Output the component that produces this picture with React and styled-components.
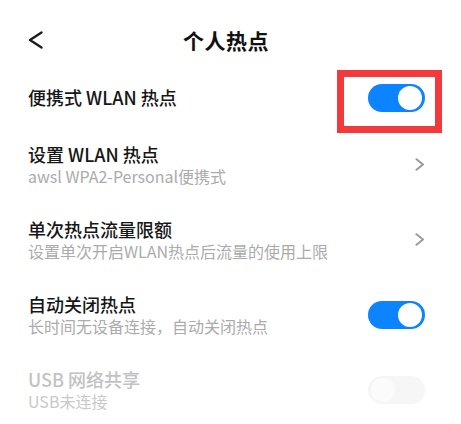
import React from 'react';
import styled, { createGlobalStyle } from 'styled-components';

const GlobalStyle = createGlobalStyle`
  html, body {
    margin: 0;
    padding: 0;
    background: #ffffff;
  }
  body {
    font-family: "Noto Sans CJK SC", "Noto Sans", sans-serif;
    -webkit-font-smoothing: antialiased;
  }
`;

const Page = styled.div`
  width: 461px;
  height: 424px;
  overflow: hidden;
  background: #ffffff;
`;

// Header
const Header = styled.header`
  height: 68px;
  box-sizing: border-box;
  padding: 12px 37px 0 28px;
  display: grid;
  grid-template-columns: 1fr auto 1fr;
  align-items: center;
`;

const BackButton = styled.button`
  justify-self: start;
  border: 0;
  background: none;
  padding: 0;
  width: 16px;
  height: 18px;
  display: flex;
  cursor: pointer;
`;

const Title = styled.h1`
  margin: 0;
  font-size: 21px;
  font-weight: 700;
  color: #111111;
  letter-spacing: 0.5px;
`;

// Rows
const List = styled.div`
  display: flex;
  flex-direction: column;
`;

const Row = styled.div`
  position: relative;
  height: ${(p) => p.$height || 75}px;
  box-sizing: border-box;
  padding: 0 36px 0 28px;
  display: flex;
  align-items: center;
  justify-content: space-between;
`;

const Texts = styled.div`
  display: flex;
  flex-direction: column;
`;

const Label = styled.div`
  font-size: 18px;
  line-height: 23px;
  font-weight: 500;
  color: ${(p) => (p.$disabled ? '#c2c2c2' : '#161616')};
`;

const Hint = styled.div`
  font-size: 16px;
  line-height: 21px;
  color: ${(p) => (p.$disabled ? '#c9c9c9' : '#ababab')};
`;

const Track = styled.div`
  position: relative;
  width: 57px;
  height: 28px;
  border-radius: 14px;
  background: ${(p) => (p.$disabled ? '#f6f6f6' : '#0d84ff')};
  flex-shrink: 0;
`;

const Knob = styled.div`
  position: absolute;
  top: 2px;
  ${(p) => (p.$on ? 'right: 3px;' : 'left: 3px;')}
  width: 24px;
  height: 24px;
  border-radius: 50%;
  background: ${(p) => (p.$disabled ? '#fbfbfb' : '#ffffff')};
`;

const Highlight = styled.div`
  position: absolute;
  left: 337px;
  top: 2px;
  width: 105px;
  height: 63px;
  box-sizing: border-box;
  border: 7px solid #f23a3c;
  pointer-events: none;
`;

const Chevron = () => (
  <svg width="10" height="13" viewBox="0 0 10 13" fill="none">
    <path d="M1.5 1.2 L8 6.5 L1.5 11.8" stroke="#9a9a9a" strokeWidth="2" strokeLinecap="round" strokeLinejoin="round" />
  </svg>
);

const Toggle = ({ on = true, disabled = false }) => (
  <Track $disabled={disabled}>
    <Knob $on={on} $disabled={disabled} />
  </Track>
);

const App = () => {
  return (
    <Page>
      <GlobalStyle />
      <Header>
        <BackButton aria-label="back">
          <svg width="16" height="18" viewBox="0 0 16 18" fill="none">
            <path d="M13.5 1.5 L2 9 L13.5 16.5" stroke="#1c1c1c" strokeWidth="2.4" strokeLinecap="round" strokeLinejoin="round" />
          </svg>
        </BackButton>
        <Title>个人热点</Title>
        <span />
      </Header>
      <List>
        <Row $height={59}>
          <Label>便携式 WLAN 热点</Label>
          <Toggle on />
          <Highlight />
        </Row>
        <Row>
          <Texts>
            <Label>设置 WLAN 热点</Label>
            <Hint>awsl WPA2-Personal便携式</Hint>
          </Texts>
          <Chevron />
        </Row>
        <Row>
          <Texts>
            <Label>单次热点流量限额</Label>
            <Hint>设置单次开启WLAN热点后流量的使用上限</Hint>
          </Texts>
          <Chevron />
        </Row>
        <Row>
          <Texts>
            <Label>自动关闭热点</Label>
            <Hint>长时间无设备连接，自动关闭热点</Hint>
          </Texts>
          <Toggle on />
        </Row>
        <Row>
          <Texts>
            <Label $disabled>USB 网络共享</Label>
            <Hint $disabled>USB未连接</Hint>
          </Texts>
          <Toggle on={false} disabled />
        </Row>
      </List>
    </Page>
  );
};

export default App;
